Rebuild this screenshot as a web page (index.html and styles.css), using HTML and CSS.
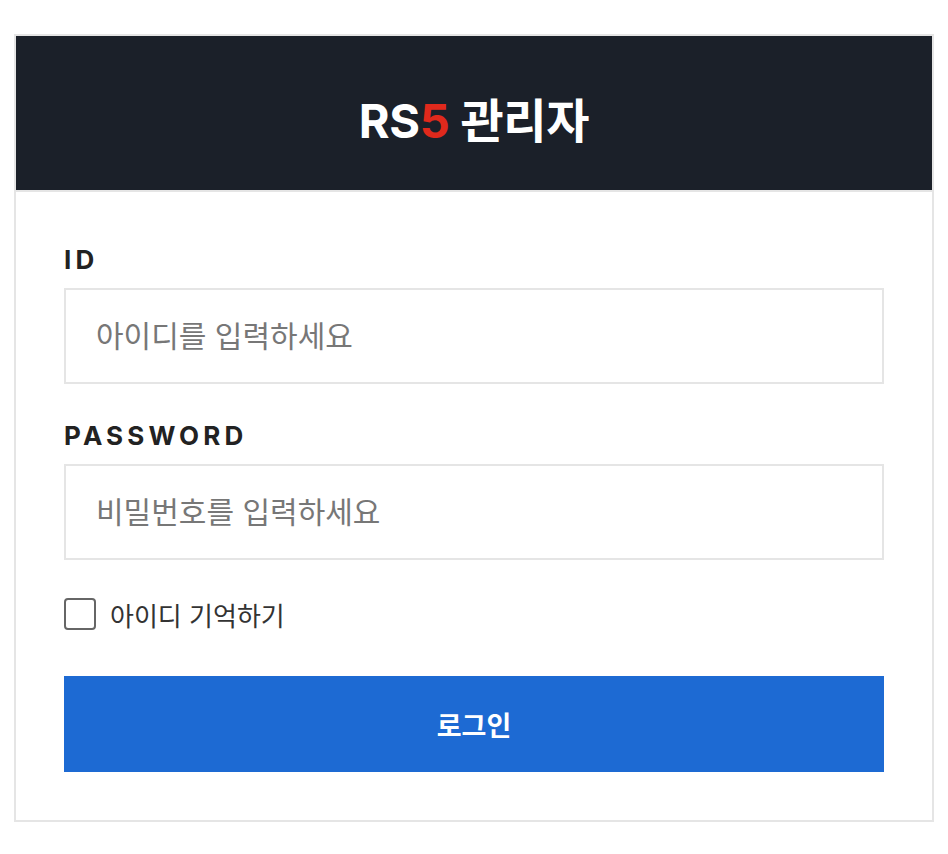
FILE: index.html
```html
<!DOCTYPE html>
<html lang="ko">
<head>
  <meta charset="UTF-8" />
  <title>RS5 관리자 로그인</title>
  <link rel="stylesheet" href="styles.css">
</head>
<body>
  <div class="login-box">
    <div class="login-head">
      <h1 class="logo">RS<span class="accent">5</span> 관리자</h1>
    </div>
    <form class="login-form" onsubmit="return false;">
      <label class="field-label" for="userId">ID</label>
      <input class="field-input" id="userId" type="text" placeholder="아이디를 입력하세요" />

      <label class="field-label" for="userPw">PASSWORD</label>
      <input class="field-input" id="userPw" type="password" placeholder="비밀번호를 입력하세요" />

      <label class="remember">
        <input type="checkbox" class="remember-check" />
        <span>아이디 기억하기</span>
      </label>

      <button type="submit" class="btn-login">로그인</button>
    </form>
  </div>
</body>
</html>
```

FILE: styles.css
```css
* {
  box-sizing: border-box;
}

body {
  margin: 0;
  padding: 34px 14px;
  background: #fff;
  font-family: Inter, "Noto Sans CJK KR", sans-serif;
  color: #222;
}

.login-box {
  border: 2px solid #e5e5e5;
  background: #fff;
}

.login-head {
  height: 156px;
  padding-top: 14px;
  background: #1b2029;
  border-bottom: 2px solid #e5e5e5;
  display: flex;
  align-items: center;
  justify-content: center;
}

.logo {
  margin: 0;
  color: #fff;
  font-size: 47px;
  font-weight: 700;
  line-height: 1;
  letter-spacing: -0.3px;
}

.logo .accent {
  color: #e0291c;
}

.login-form {
  display: flex;
  flex-direction: column;
  padding: 50px 48px 48px;
}

.field-label {
  font-size: 26px;
  line-height: 36px;
  font-weight: 700;
  letter-spacing: 4.2px;
  color: #222;
  margin-bottom: 10px;
}

.field-input {
  height: 96px;
  border: 2px solid #e5e5e5;
  padding: 0 30px;
  font-family: inherit;
  font-size: 30px;
  color: #222;
  outline: none;
  margin-bottom: 34px;
}

.field-input::placeholder {
  color: #777;
}

.field-input + .remember {
  margin-top: 2px;
}

.remember {
  display: flex;
  align-items: center;
  gap: 14px;
  height: 36px;
  font-size: 26px;
  color: #333;
  cursor: pointer;
}

.remember-check {
  appearance: none;
  margin: 0;
  width: 32px;
  height: 32px;
  border: 2px solid #666;
  border-radius: 4px;
  background: #fff;
}

.remember-check:checked {
  background: #1d6ad3;
  border-color: #1d6ad3;
}

.btn-login {
  margin-top: 44px;
  height: 96px;
  border: 0;
  background: #1d6ad3;
  color: #fff;
  font-family: inherit;
  font-size: 27px;
  font-weight: 700;
  cursor: pointer;
}
```
